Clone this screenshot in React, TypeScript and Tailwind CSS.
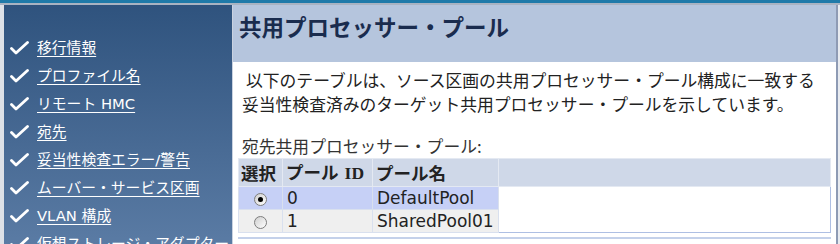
import type { ReactNode } from "react";

// Шаги мастера в боковой панели
const steps: readonly string[] = [
  "移行情報",
  "プロファイル名",
  "リモート HMC",
  "宛先",
  "妥当性検査エラー/警告",
  "ムーバー・サービス区画",
  "VLAN 構成",
  "仮想ストレージ・アダプター",
];

interface Pool {
  readonly id: number;
  readonly name: string;
}

const pools: readonly Pool[] = [
  { id: 0, name: "DefaultPool" },
  { id: 1, name: "SharedPool01" },
];

const jp = { fontFamily: '"Noto Sans CJK JP", sans-serif' };

function Check() {
  return (
    <svg width="19" height="14" viewBox="0 0 19 14" className="shrink-0">
      <path d="M1.5 7.5 L6 12 L17.5 1.5" fill="none" stroke="white" strokeWidth="2.8" strokeLinecap="round" strokeLinejoin="round" />
    </svg>
  );
}

function Radio({ checked }: { readonly checked: boolean }) {
  return (
    <span className="inline-flex h-[13px] w-[13px] items-center justify-center rounded-full border border-[#7d7d7d] bg-gradient-to-br from-[#cfcfcf] to-white">
      {checked && <span className="h-[5px] w-[5px] rounded-full bg-black" />}
    </span>
  );
}

function Cell({ children, className }: { readonly children?: ReactNode; readonly className?: string }) {
  return <td className={`border border-[#d9e0ee] px-[4px] py-0 ${className ?? ""}`}>{children}</td>;
}

export default function App() {
  return (
    <div
      className="relative h-[244px] w-[840px] overflow-hidden bg-white text-[#222]"
      style={{ fontFamily: '"DejaVu Sans", "Noto Sans CJK JP", sans-serif' }}
    >
      {/* Верхняя полоса */}
      <div className="h-[3px] bg-[#1f7aa9]" />
      <div className="h-[2px] bg-[#a9b3c2]" />

      <div className="flex h-[239px]">
        <div className="w-[4px] bg-[#dde1e7]" />

        {/* Боковая панель */}
        <nav className="w-[229px] overflow-hidden bg-gradient-to-b from-[#2f537e] to-[#5a7ba4] pt-[29px]">
          {steps.map((step) => (
            <div key={step} className="flex h-[28px] items-center gap-[8px] pl-[6px] text-[14.8px] text-white">
              <Check />
              <span className="whitespace-nowrap underline underline-offset-[3px]">{step}</span>
            </div>
          ))}
        </nav>

        {/* Основная область */}
        <main className="flex flex-1 flex-col border-l border-[#c9d2e0]">
          <div className="h-[57px] bg-[#b5c5dd] pl-[6px] pt-[6px]">
            <h1 className="text-[22.5px] font-bold leading-[30px] text-[#1a2c4e]" style={jp}>
              共用プロセッサー・プール
            </h1>
          </div>

          <div className="px-[5px] pt-[6px]">
            <p className="pl-[4px] text-[16.8px] leading-[24px]" style={jp}>
              <span className="pl-[4px]">以下のテーブルは、ソース区画の共用プロセッサー・プール構成に一致する</span>
              <br />
              妥当性検査済みのターゲット共用プロセッサー・プールを示しています。
            </p>
            <p className="mt-[18px] pl-[4px] text-[16.8px] leading-[24px] text-[#333]" style={jp}>
              宛先共用プロセッサー・プール:
            </p>

            <table className="w-[593px] border-collapse border border-[#aebfe3] text-[17px]">
              <thead>
                <tr className="h-[27px] bg-[#cfd8e8] text-left text-[17.5px] font-bold">
                  <th className="w-[44px] border border-[#e4e9f2] px-[2px]" style={jp}>
                    選択
                  </th>
                  <th className="w-[90px] border border-[#e4e9f2] px-[3px]">
                    <span style={jp}>プール</span>{" "}
                    <span style={{ fontFamily: '"Liberation Serif", serif' }}>ID</span>
                  </th>
                  <th className="w-[126px] border border-[#e4e9f2] px-[3px]" style={jp}>
                    プール名
                  </th>
                  <th className="border border-[#e4e9f2]" />
                </tr>
              </thead>
              <tbody>
                {pools.map((pool, i) => (
                  <tr key={pool.id} className="h-[23px] leading-[20px]">
                    <Cell className={`text-center ${i === 0 ? "bg-[#c6d0f6]" : "bg-[#efefef]"}`}>
                      <span className="inline-flex align-middle">
                        <Radio checked={i === 0} />
                      </span>
                    </Cell>
                    <Cell className={i === 0 ? "bg-[#c6d0f6]" : "bg-[#efefef]"}>{pool.id}</Cell>
                    <Cell className={i === 0 ? "bg-[#c6d0f6]" : "bg-[#efefef]"}>{pool.name}</Cell>
                    <td className="border-0 bg-white" />
                  </tr>
                ))}
              </tbody>
            </table>

            <div className="mt-[4px] h-[2px] w-[593px] bg-[#c4d1ea]" />
          </div>
        </main>

        {/* Правая рамка */}
        <div className="w-[2px] bg-[#8e9bb4]" />
        <div className="w-[2px] bg-[#e8ebf0]" />
      </div>
    </div>
  );
}
